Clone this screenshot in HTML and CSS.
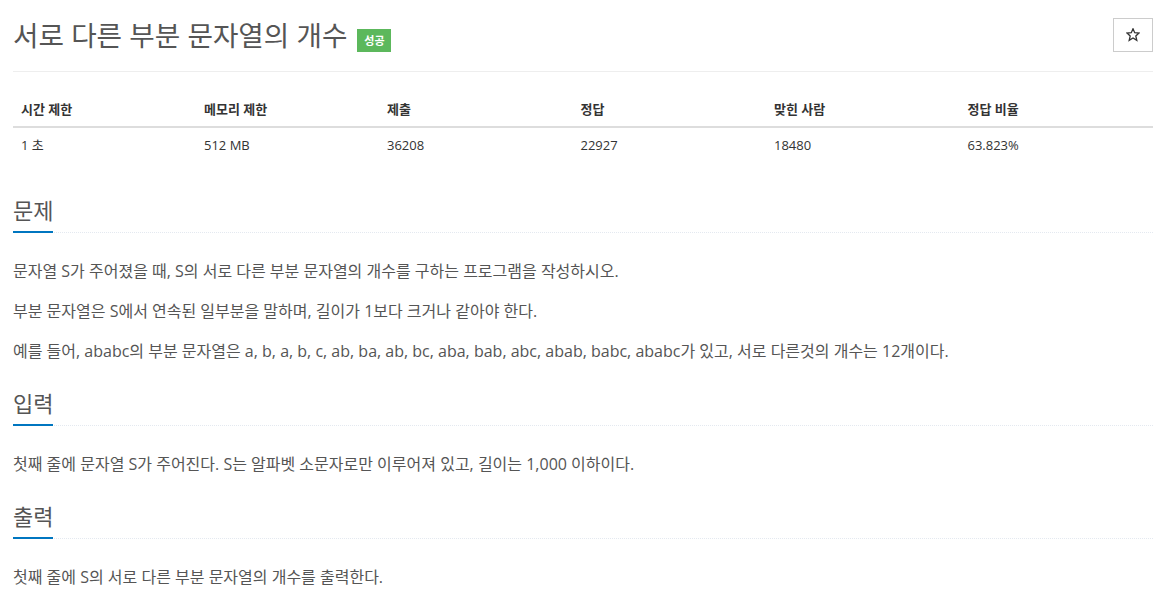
FILE: index.html
```html
<!DOCTYPE html>
<html lang="ko">
<head>
<meta charset="utf-8">
<title>서로 다른 부분 문자열의 개수</title>
<link rel="stylesheet" href="styles.css">
</head>
<body>
<div class="page">
  <div class="page-header">
    <h1 class="title"><span class="title-text">서로 다른 부분 문자열의 개수</span><span class="badge">성공</span></h1>
    <button class="star-btn" type="button" aria-label="즐겨찾기">
      <svg width="14" height="14" viewBox="0 0 14 14" aria-hidden="true">
        <polygon points="7,0.8 8.7,4.7 13,5 9.8,7.9 10.8,12.4 7,10 3.2,12.4 4.2,7.9 1,5 5.3,4.7" fill="none" stroke="#333" stroke-width="1.3" stroke-linejoin="miter"/>
      </svg>
    </button>
  </div>

  <table class="info">
    <thead>
      <tr><th>시간 제한</th><th>메모리 제한</th><th>제출</th><th>정답</th><th>맞힌 사람</th><th>정답 비율</th></tr>
    </thead>
    <tbody>
      <tr><td>1 초</td><td>512 MB</td><td>36208</td><td>22927</td><td>18480</td><td>63.823%</td></tr>
    </tbody>
  </table>

  <section class="section">
    <div class="headline"><h2>문제</h2></div>
    <div class="text">
      <p>문자열 S가 주어졌을 때, S의 서로 다른 부분 문자열의 개수를 구하는 프로그램을 작성하시오.</p>
      <p>부분 문자열은 S에서 연속된 일부분을 말하며, 길이가 1보다 크거나 같아야 한다.</p>
      <p>예를 들어, ababc의 부분 문자열은 a, b, a, b, c, ab, ba, ab, bc, aba, bab, abc, abab, babc, ababc가 있고, 서로 다른것의 개수는 12개이다.</p>
    </div>
  </section>

  <section class="section">
    <div class="headline"><h2>입력</h2></div>
    <div class="text">
      <p>첫째 줄에 문자열 S가 주어진다. S는 알파벳 소문자로만 이루어져 있고, 길이는 1,000 이하이다.</p>
    </div>
  </section>

  <section class="section">
    <div class="headline"><h2>출력</h2></div>
    <div class="text">
      <p>첫째 줄에 S의 서로 다른 부분 문자열의 개수를 출력한다.</p>
    </div>
  </section>
</div>
</body>
</html>
```

FILE: styles.css
```css
html, body {
  margin: 0;
  padding: 0;
  background: #fff;
}

body {
  font-family: "Open Sans", "Noto Sans CJK KR", sans-serif;
  font-size: 14px;
  color: #333;
}

.page {
  width: 1140px;
  margin-left: 13px;
  display: flex;
  flex-direction: column;
}

.page-header {
  display: flex;
  align-items: center;
  justify-content: space-between;
  padding: 17px 0 19px;
  border-bottom: 1px solid #eee;
}

.title {
  margin: 0;
  display: flex;
  align-items: center;
  gap: 10px;
  font-size: 27.7px;
  font-weight: 400;
  line-height: 34px;
  color: #555;
}

.title-text {
  padding-top: 1px;
}

.badge {
  display: flex;
  align-items: center;
  justify-content: center;
  width: 34px;
  height: 23px;
  margin-top: 11px;
  background: #5cb85c;
  color: #fff;
  font-size: 11px;
  font-weight: 700;
  line-height: 1;
}

.star-btn {
  width: 40px;
  height: 34px;
  padding: 0;
  border: 1px solid #ccc;
  background: #fff;
  display: flex;
  align-items: center;
  justify-content: center;
}

.info {
  margin-top: 20px;
  width: 100%;
  border-collapse: collapse;
  table-layout: fixed;
}

.info th,
.info td {
  padding: 8px;
  text-align: left;
  line-height: 18px;
  font-size: 13px;
  color: #333;
}

.info th {
  font-weight: 700;
  border-bottom: 2px solid #ddd;
}

.info th:nth-child(1),
.info th:nth-child(2) { width: 16%; }
.info th:nth-child(n+3) { width: 17%; }

.section {
  display: flex;
  flex-direction: column;
  gap: 26px;
  margin-top: 23px;
}

.info + .section {
  margin-top: 32px;
}

.headline {
  display: flex;
  border-bottom: 1px dotted #e4e9f0;
}

.headline h2 {
  margin: 0 0 -1px;
  padding-bottom: 5px;
  font-size: 22px;
  font-weight: 400;
  line-height: 32px;
  color: #555;
  border-bottom: 2px solid #0076c0;
}

.text {
  display: flex;
  flex-direction: column;
  gap: 15px;
}

.text p {
  margin: 0;
  font-size: 16px;
  line-height: 25px;
  color: #555;
}
```
